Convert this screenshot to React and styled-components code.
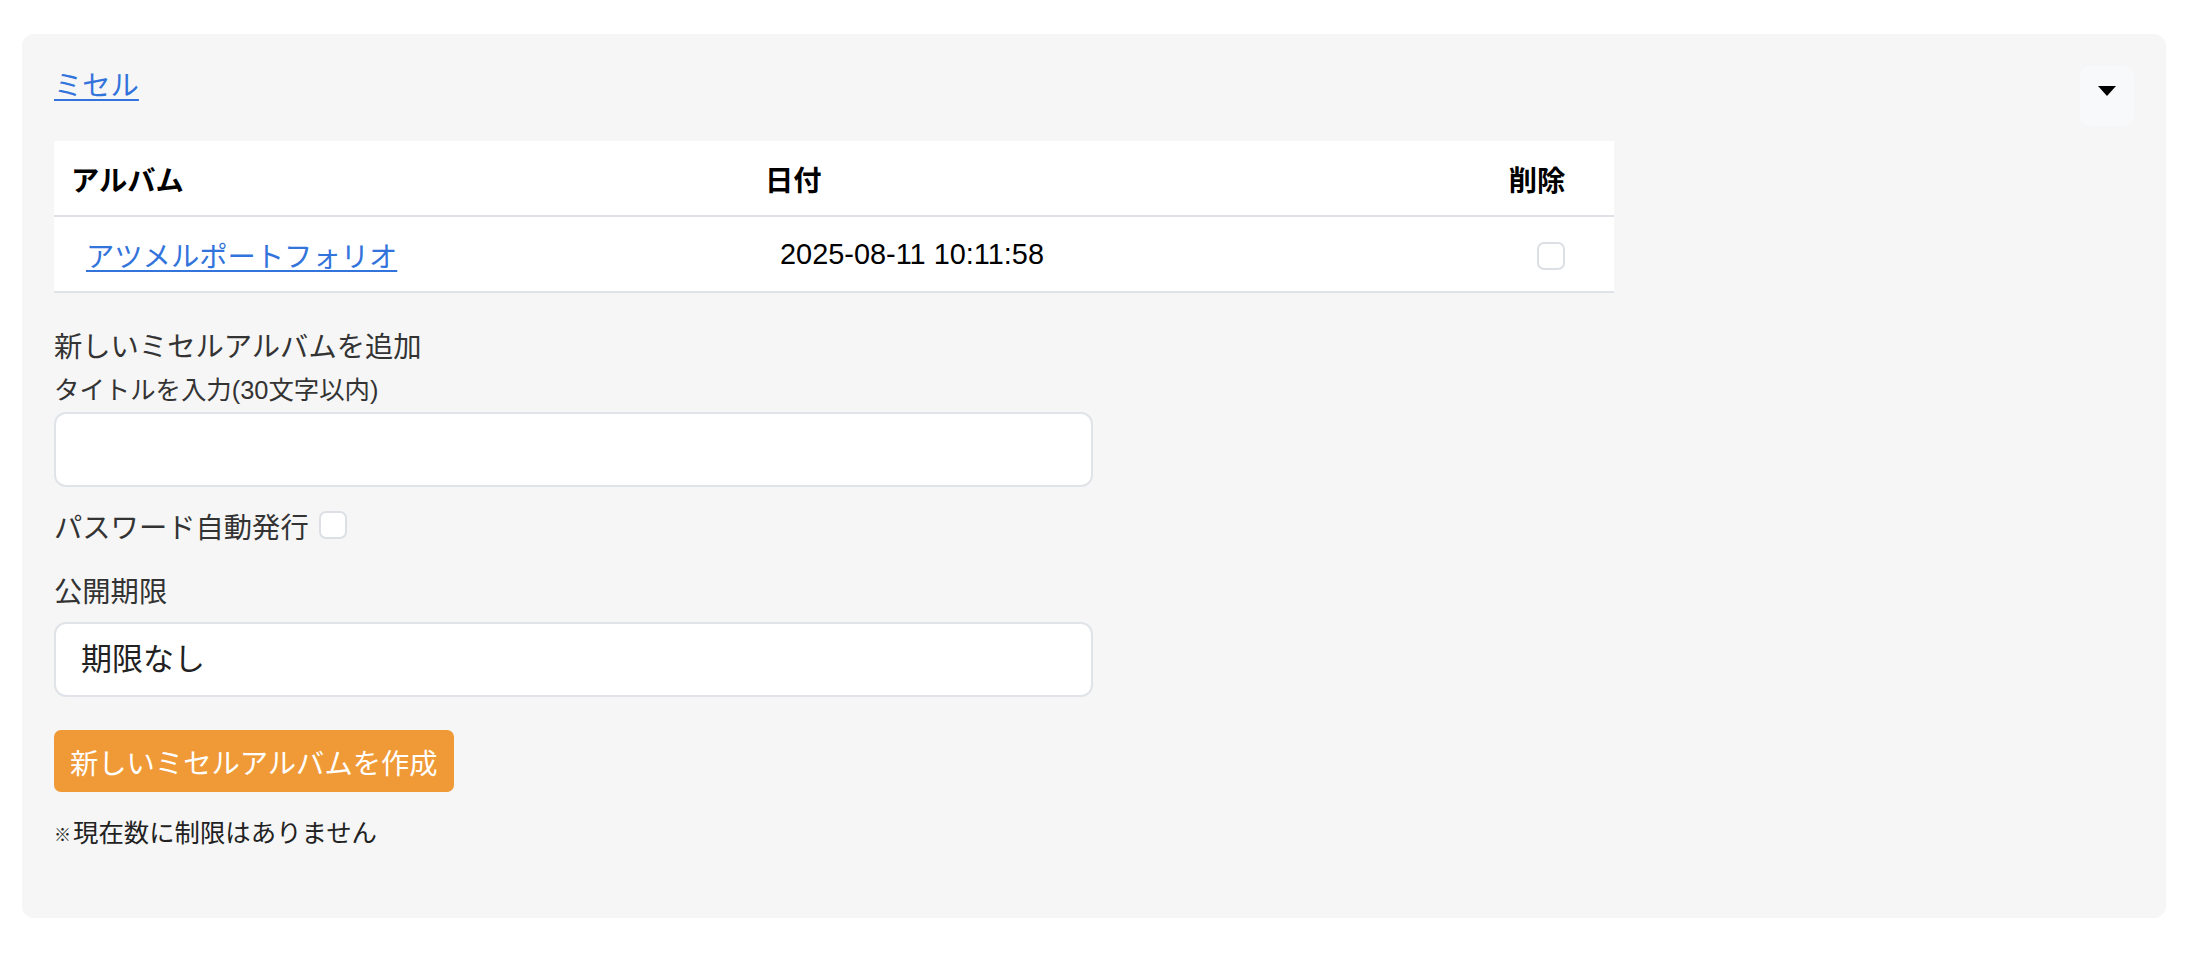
import React from "react";
import styled, { createGlobalStyle } from "styled-components";

const GlobalStyle = createGlobalStyle`
  html, body {
    margin: 0;
    padding: 0;
    background: #ffffff;
  }
  body {
    font-family: "Liberation Sans", "Noto Sans CJK JP", sans-serif;
    color: #333333;
  }
`;

const Page = styled.div`
  padding: 34px 40px 40px 22px;
`;

const Card = styled.section`
  background: #f6f6f6;
  border-radius: 12px;
  padding: 32px 32px 65px 32px;
`;

const HeaderRow = styled.div`
  display: flex;
  justify-content: space-between;
  align-items: flex-start;
`;

const TitleLink = styled.a`
  font-size: 28.3px;
  line-height: 40px;
  color: #3273dc;
  text-decoration: underline;
  text-underline-offset: 3px;
`;

const ToggleButton = styled.button`
  width: 54px;
  height: 60px;
  border: none;
  border-radius: 10px;
  background: #f8f9fb;
  display: flex;
  justify-content: center;
  align-items: flex-start;
  padding: 20px 0 0 0;
  cursor: pointer;
`;

const Table = styled.table`
  margin-top: 15px;
  width: 1560px;
  border-collapse: collapse;
  background: #ffffff;
  table-layout: fixed;
`;

const Th = styled.th`
  height: 74px;
  padding: ${(p) => (p.$align === "center" ? "0 32px 0 18px" : "0 18px 0 17px")};
  font-size: 28.3px;
  font-weight: 700;
  color: #000000;
  text-align: ${(p) => p.$align || "left"};
  border-bottom: 2px solid #dfe2e6;
`;

const Td = styled.td`
  height: 74px;
  padding: 0 18px 0 32px;
  font-size: 28.3px;
  color: #000000;
  text-align: ${(p) => p.$align || "left"};
  vertical-align: middle;
  border-bottom: 2px solid #dfe2e6;
`;

const DateText = styled.span`
  font-size: 28.9px;
`;

const RowLink = styled.a`
  color: #3273dc;
  text-decoration: underline;
  text-underline-offset: 3px;
`;

const Check = styled.input.attrs({ type: "checkbox" })`
  appearance: none;
  -webkit-appearance: none;
  width: 28px;
  height: 28px;
  margin: 0;
  border: 2px solid #dcdfe4;
  border-radius: 7px;
  background: #ffffff;
  vertical-align: middle;
  box-sizing: border-box;
`;

const Heading = styled.div`
  margin-top: 34px;
  font-size: 28.3px;
  line-height: 40px;
  color: #333333;
`;

const Label = styled.div`
  margin-top: ${(p) => p.$mt || 0}px;
  font-size: ${(p) => p.$size || 25.4}px;
  line-height: ${(p) => p.$lh || 34}px;
  color: #333333;
`;

const TextInput = styled.input`
  display: block;
  box-sizing: border-box;
  margin-top: 5px;
  width: 1039px;
  height: 75px;
  border: 2px solid #e0e3e7;
  border-radius: 12px;
  background: #ffffff;
  padding: 0 25px;
  font-size: 28px;
  font-family: inherit;
  outline: none;
`;

const CheckRow = styled.label`
  display: flex;
  align-items: center;
  gap: 10px;
  margin-top: 18px;
  height: 40px;
  font-size: 28.3px;
  color: #333333;
`;

const Select = styled.select`
  display: block;
  box-sizing: border-box;
  margin-top: 10px;
  width: 1039px;
  height: 75px;
  border: 2px solid #e0e3e7;
  border-radius: 12px;
  background: #ffffff;
  padding: 0 25px;
  font-size: 31px;
  font-family: inherit;
  color: #222222;
  appearance: none;
  -webkit-appearance: none;
  outline: none;
`;

const CreateButton = styled.button`
  display: inline-flex;
  align-items: center;
  margin-top: 33px;
  height: 62px;
  padding: 0 16px;
  border: none;
  border-radius: 7px;
  background: #f09a37;
  color: #ffffff;
  font-size: 28.3px;
  font-family: inherit;
  cursor: pointer;
`;

const Note = styled.div`
  margin-top: 24px;
  font-size: 25.4px;
  line-height: 34px;
  color: #222222;
`;

const Mark = styled.span`
  display: inline-block;
  font-size: 17px;
  margin-right: 2px;
  vertical-align: 1px;
`;

export default function App() {
  return (
    <>
      <GlobalStyle />
      <Page>
        <Card>
          <HeaderRow>
            <TitleLink href="#">ミセル</TitleLink>
            <ToggleButton aria-label="toggle">
              <svg width="18" height="10" viewBox="0 0 18 10">
                <polygon points="0,0 18,0 9,10" fill="#000" />
              </svg>
            </ToggleButton>
          </HeaderRow>

          <Table>
            <colgroup>
              <col style={{ width: "694px" }} />
              <col style={{ width: "726px" }} />
              <col style={{ width: "140px" }} />
            </colgroup>
            <thead>
              <tr>
                <Th>アルバム</Th>
                <Th>日付</Th>
                <Th $align="center">削除</Th>
              </tr>
            </thead>
            <tbody>
              <tr>
                <Td>
                  <RowLink href="#">アツメルポートフォリオ</RowLink>
                </Td>
                <Td>
                  <DateText>2025-08-11 10:11:58</DateText>
                </Td>
                <Td $align="center">
                  <Check />
                </Td>
              </tr>
            </tbody>
          </Table>

          <Heading>新しいミセルアルバムを追加</Heading>
          <Label $mt={6}>タイトルを入力(30文字以内)</Label>
          <TextInput type="text" />

          <CheckRow>
            パスワード自動発行
            <Check />
          </CheckRow>

          <Label $mt={27} $size={28.3} $lh={40}>
            公開期限
          </Label>
          <Select defaultValue="none">
            <option value="none">期限なし</option>
          </Select>

          <CreateButton>新しいミセルアルバムを作成</CreateButton>
          <Note>
            <Mark>※</Mark>現在数に制限はありません
          </Note>
        </Card>
      </Page>
    </>
  );
}
